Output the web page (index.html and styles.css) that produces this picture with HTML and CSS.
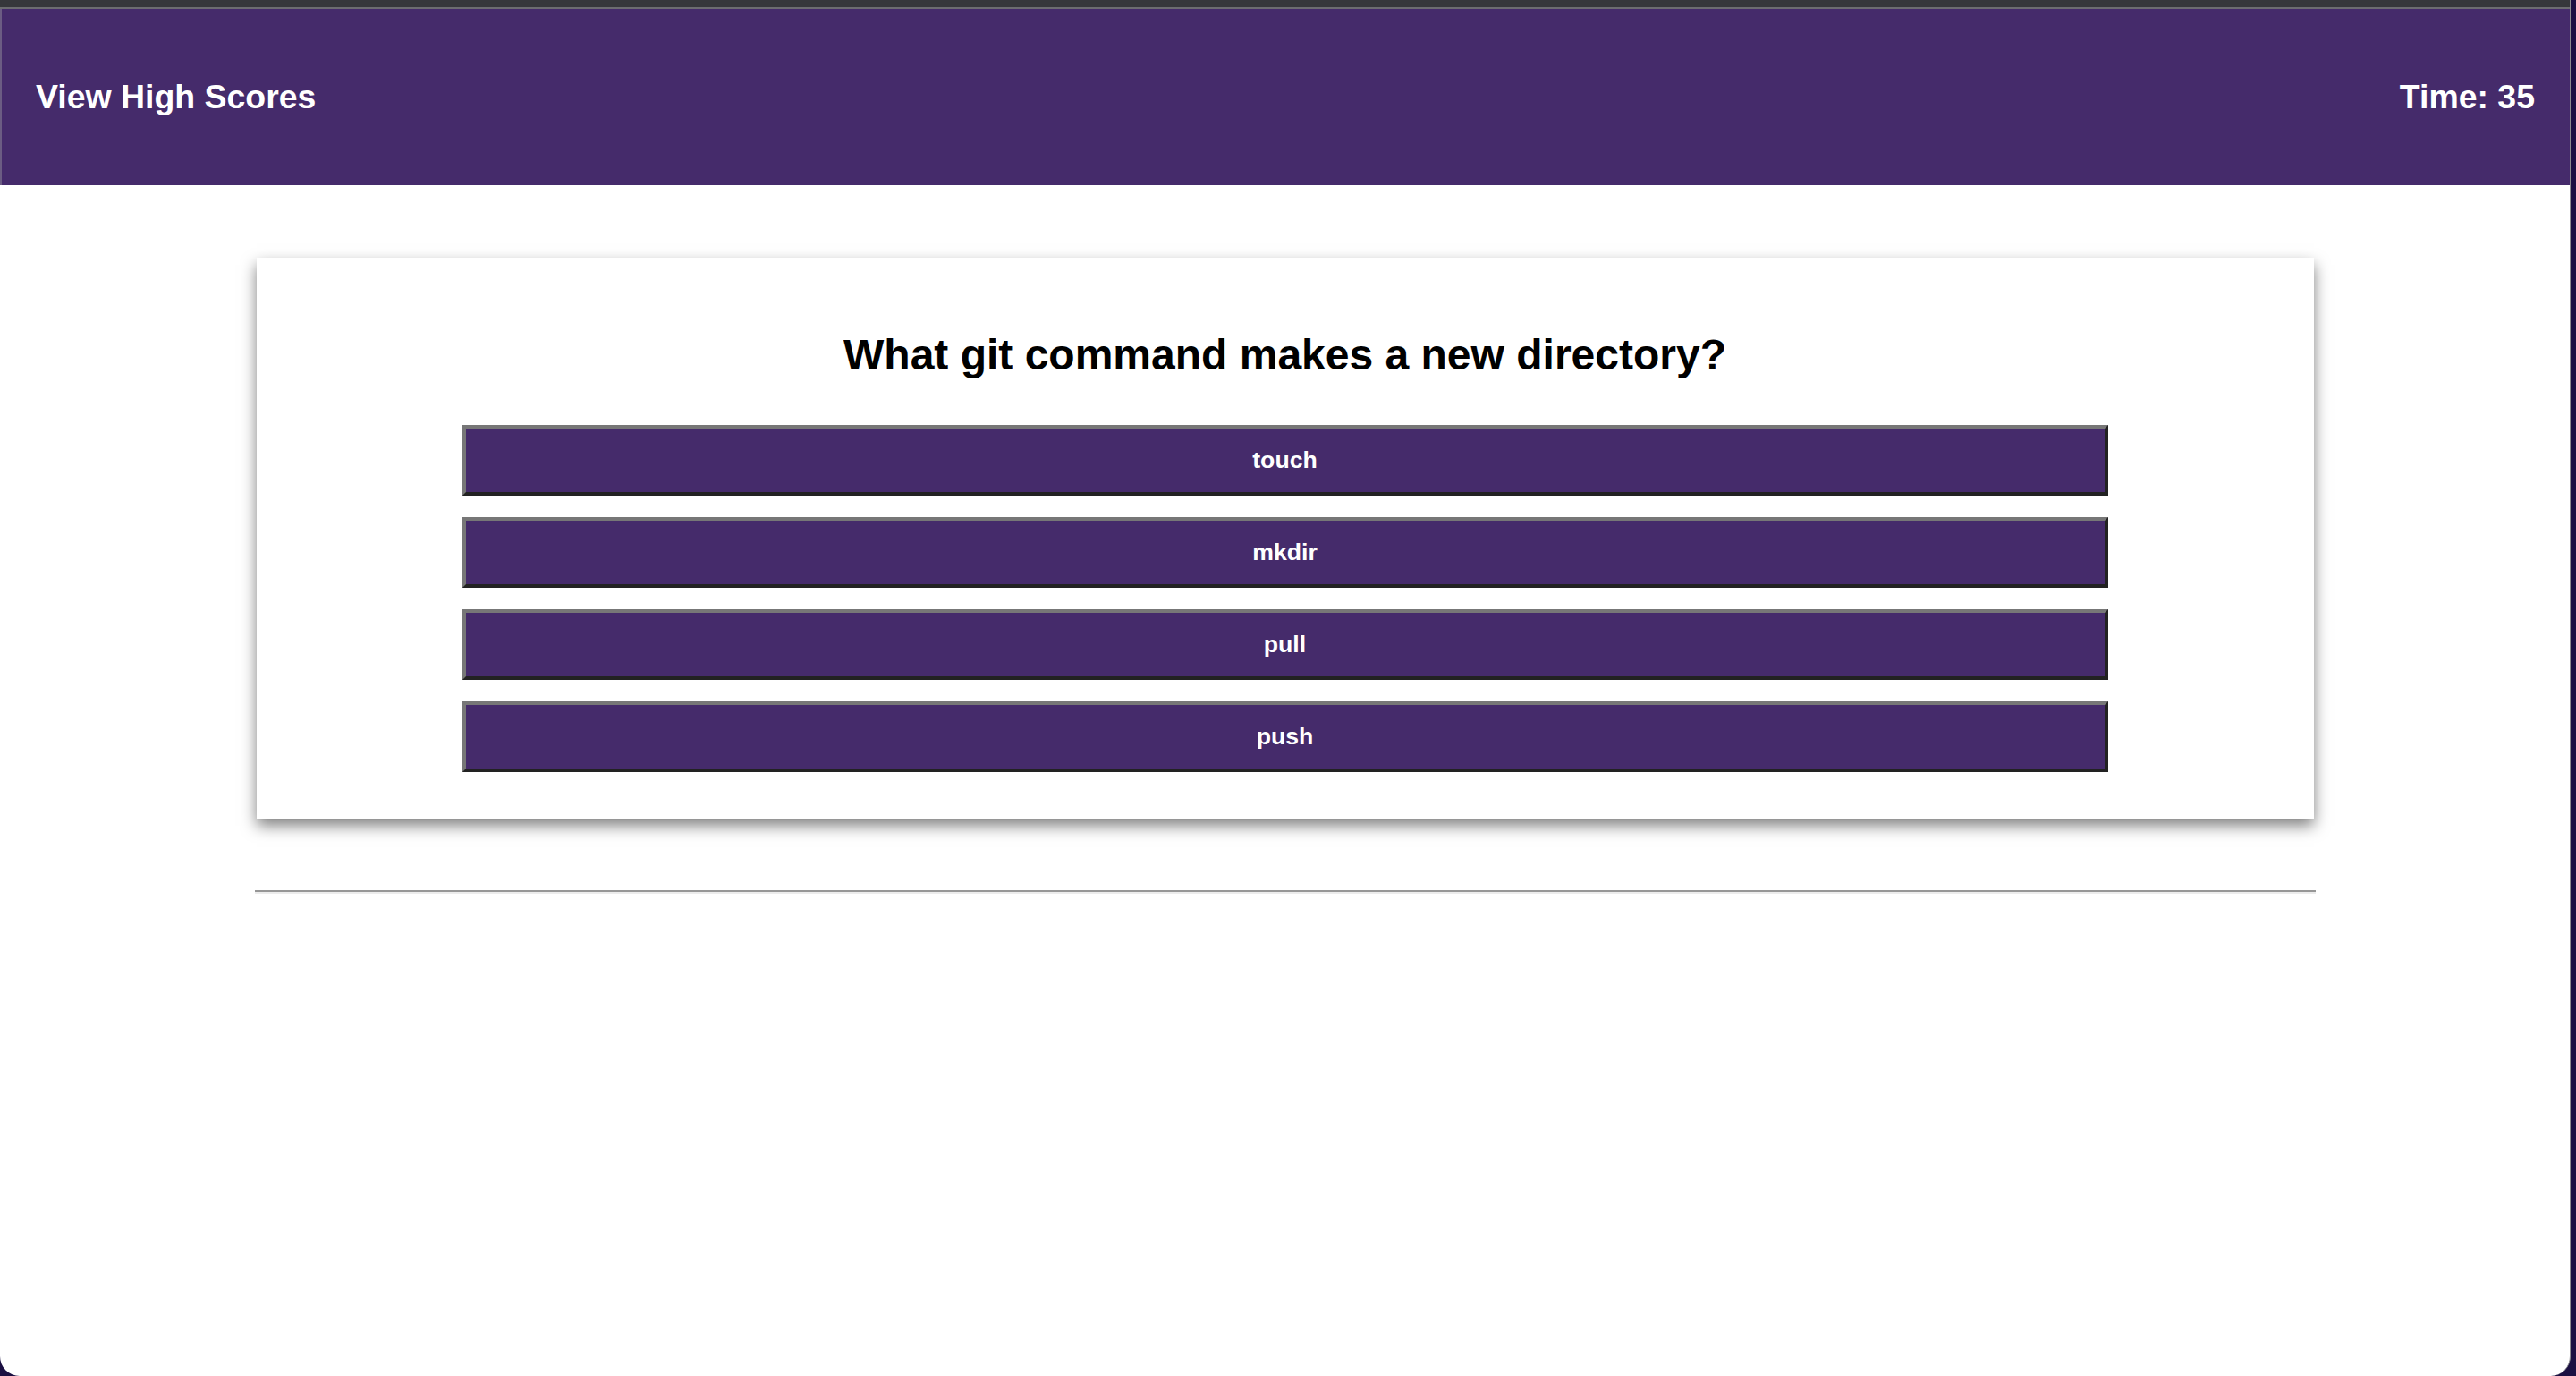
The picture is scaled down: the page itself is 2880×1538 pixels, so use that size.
FILE: index.html
```html
<!DOCTYPE html>
<html lang="en">
<head>
<meta charset="utf-8">
<title>Code Quiz</title>
<link rel="stylesheet" href="styles.css">
</head>
<body>
<div class="window">
  <div class="chrome"></div>
  <header class="topbar">
    <h3 class="topbar-link">View High Scores</h3>
    <h3 class="topbar-timer">Time: 35</h3>
  </header>
  <main class="content">
    <section class="card">
      <h2 class="question">What git command makes a new directory?</h2>
      <div class="answers">
        <button class="answer">touch</button>
        <button class="answer">mkdir</button>
        <button class="answer">pull</button>
        <button class="answer">push</button>
      </div>
    </section>
    <hr class="divider">
  </main>
</div>
</body>
</html>
```

FILE: styles.css
```css
html, body {
  margin: 0;
  padding: 0;
  height: 100%;
}

body {
  background: #1b1042;
  font-family: "Liberation Sans", Arial, sans-serif;
  overflow: hidden;
}

.window {
  width: calc(100% - 6px);
  height: 100%;
  background: #ffffff;
  border-radius: 0 0 22px 22px;
  border-right: 1px solid #8a8a8e;
  box-sizing: border-box;
  overflow: hidden;
  display: flex;
  flex-direction: column;
}

.chrome {
  height: 8px;
  background: #36373b;
  border-bottom: 2px solid #6c6c70;
  flex: none;
}

.topbar {
  flex: none;
  height: 197px;
  background: #452b6b;
  border-left: 2px solid #6b5c83;
  padding: 0 39px 0 38px;
  display: flex;
  justify-content: space-between;
  align-items: center;
  color: #ffffff;
}

.topbar-link,
.topbar-timer {
  margin: 0;
  font-size: 37.44px;
  font-weight: bold;
  line-height: 43px;
}

.content {
  display: flex;
  flex-direction: column;
  align-items: center;
  padding-top: 81px;
}

.card {
  width: 2300px;
  box-sizing: border-box;
  background: #ffffff;
  box-shadow: 0 8px 16px rgba(0, 0, 0, 0.5);
  padding: 81px 0 52px;
  display: flex;
  flex-direction: column;
  align-items: center;
}

.question {
  margin: 0;
  font-size: 48px;
  font-weight: bold;
  line-height: 55px;
  color: #000000;
}

.answers {
  width: 80%;
  margin-top: 51px;
  display: flex;
  flex-direction: column;
  gap: 24px;
}

.answer {
  height: 79px;
  width: 100%;
  margin: 0;
  padding: 0;
  background: #452b6b;
  color: #ffffff;
  font-family: "Liberation Sans", Arial, sans-serif;
  font-size: 26.67px;
  font-weight: bold;
  border-style: solid;
  border-width: 4px;
  border-color: #777777 #222222 #222222 #777777;
  cursor: pointer;
}

.divider {
  width: 2304px;
  margin: 80px 0 0;
  height: 0;
  border: none;
  border-top: 2px solid #979797;
  border-bottom: 2px solid #ececec;
}
```
